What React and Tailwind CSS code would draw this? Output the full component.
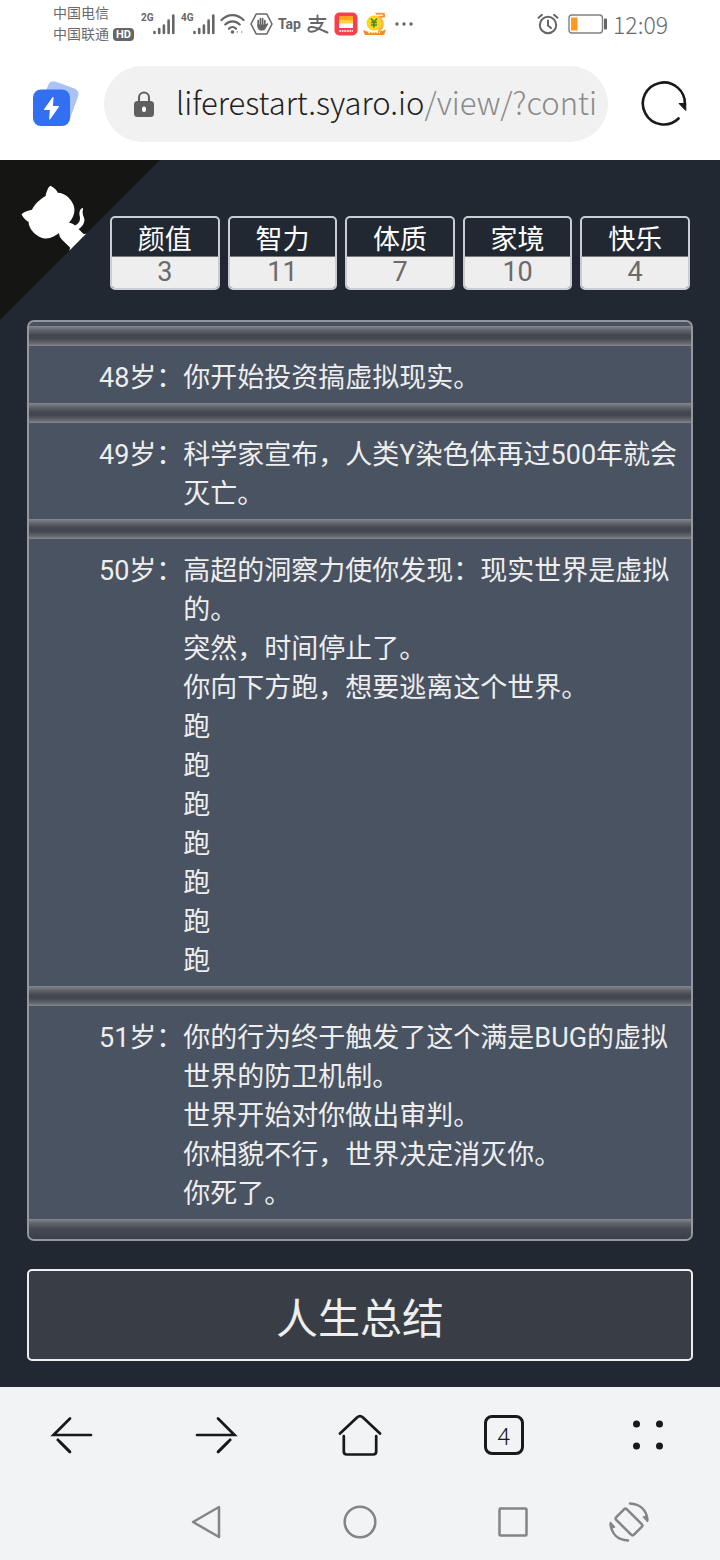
import React from "react";

const stats = [
  { label: "颜值", value: 3 },
  { label: "智力", value: 11 },
  { label: "体质", value: 7 },
  { label: "家境", value: 10 },
  { label: "快乐", value: 4 },
];

const events = [
  { age: 48, lines: ["你开始投资搞虚拟现实。"] },
  { age: 49, lines: ["科学家宣布，人类Y染色体再过500年就会灭亡。"] },
  {
    age: 50,
    lines: [
      "高超的洞察力使你发现：现实世界是虚拟的。",
      "突然，时间停止了。",
      "你向下方跑，想要逃离这个世界。",
      "跑",
      "跑",
      "跑",
      "跑",
      "跑",
      "跑",
      "跑",
    ],
  },
  {
    age: 51,
    lines: [
      "你的行为终于触发了这个满是BUG的虚拟世界的防卫机制。",
      "世界开始对你做出审判。",
      "你相貌不行，世界决定消灭你。",
      "你死了。",
    ],
  },
];

function Signal({ label }) {
  return (
    <span className="flex h-[22px] w-[33px] items-start text-[#666]">
      <span className="w-3 shrink-0 text-[10px] leading-[10px] font-bold font-['Roboto',sans-serif]">{label}</span>
      <svg className="shrink-0" width="22" height="22" viewBox="0 0 22 22" fill="none" stroke="currentColor" strokeWidth="2.6" strokeLinecap="round" aria-hidden="true">
        <path d="M1.5 20v-1M6.2 20v-4M10.9 20V12.5M15.6 20V7.5M20.3 20V2.5" />
      </svg>
    </span>
  );
}

function StatusBar() {
  return (
    <header className="flex h-12 items-center justify-between bg-white pr-[52px] pl-[53px] text-[#6b6b6b]">
      <div className="flex items-center">
        <div className="text-[14px] leading-[21px]">
          <div>中国电信</div>
          <div className="flex items-center gap-1">
            中国联通
            <span className="rounded-[4px] bg-[#666] px-[3px] font-['Roboto',sans-serif] text-[11px] leading-[13px] font-bold text-white">HD</span>
          </div>
        </div>
        <div className="ml-[7px] flex items-center gap-[7px]">
          <Signal label="2G" />
          <Signal label="4G" />
        </div>
        <svg className="ml-[6px]" width="26" height="22" viewBox="0 0 26 22" fill="none" stroke="#666" strokeWidth="2.2" strokeLinecap="round" aria-hidden="true">
          <path d="M1.5 7C8 .5 17 .5 23.5 7M5.3 11.5c4.2-4.2 10.200-4.200 14.400 0M9 15.600c2-2 5-2 7 0" />
          <circle cx="12.500" cy="19" r="1.800" fill="#666" stroke="none" />
          <path d="M18 17.500v3l-2-1.500zM21 17.500v3l2-1.500z" fill="#bbb" stroke="none" />
        </svg>
        <svg className="ml-1" width="23" height="24" viewBox="0 0 23 24" fill="none" stroke="#666" aria-hidden="true">
          <path d="M6.200 2h10.600L22 12l-5.200 10H6.200L1 12z" strokeWidth="1.600" strokeLinejoin="round" />
          <path d="M8.200 14V8.500M10.400 13V6.500M12.600 13V6.500M14.800 14V8.500" strokeWidth="1.700" strokeLinecap="round" />
          <path d="M7.300 12.500h8.400l1.800-1.500.8 1-2.800 4.700c-1 1.500-2 1.800-3.900 1.800-3 0-4.300-2-4.300-6z" fill="#666" stroke="none" />
        </svg>
        <span className="ml-[5px] font-['Roboto',sans-serif] text-[14px] leading-5 font-bold text-[#666]">Tap</span>
        <svg className="ml-[6px]" width="22" height="20" viewBox="0 0 22 20" fill="none" stroke="#666" strokeWidth="1.900" strokeLinecap="round" aria-hidden="true">
          <path d="M2.500 5h16M10.500 1.500V9M4 9h11.500C13.500 14 9 17.800 4.500 17.800c-4.500 0-4-5 .3-4.800C10 13.200 14 16 20.500 18.500" />
        </svg>
        <svg className="ml-[5px]" width="24" height="24" viewBox="0 0 24 24" aria-hidden="true">
          <rect x=".5" y=".5" width="23" height="23" rx="5" fill="#f4404f" />
          <path d="M5 4h14v5H5z" fill="#ffa51f" />
          <path d="M5 8h14v4H5z" fill="#ffd23a" />
          <path d="M5 11.500h14V16H5z" fill="#fff" />
          <path d="M5 19h14" stroke="#fff" strokeWidth="1.500" strokeDasharray="2 .6" />
        </svg>
        <svg className="ml-1" width="25" height="24" viewBox="0 0 25 24" aria-hidden="true">
          <path d="M13 .8h9.500l1 4.500-6.500 1z" fill="#f5943a" />
          <path d="M15 3.200h6" stroke="#fff" strokeWidth="1.200" />
          <path d="M17 4c5 3 6 9 3 14l-4 3z" fill="#f8b84a" />
          <circle cx="12" cy="11" r="7.500" fill="#ffd51f" />
          <path d="M1 18c7 3 15 3 23-.5L22 23H3z" fill="#f28a2b" />
          <path d="M6 20.700h12" stroke="#fff2b0" strokeWidth="1.200" strokeDasharray="2 .7" />
          <path d="M9 6.500l3 3.500 3-3.500M12 10v5.500M9 10.500h6M9 13h6" fill="none" stroke="#4f8a1c" strokeWidth="1.700" />
        </svg>
        <svg className="ml-2" width="18" height="4" viewBox="0 0 18 4" fill="#666" aria-hidden="true">
          <circle cx="2" cy="2" r="1.700" />
          <circle cx="9" cy="2" r="1.700" />
          <circle cx="16" cy="2" r="1.700" />
        </svg>
      </div>
      <div className="flex items-center">
        <svg width="22" height="22" viewBox="0 0 22 22" fill="none" stroke="#666" strokeWidth="2" strokeLinecap="round" aria-hidden="true">
          <circle cx="11" cy="12" r="8.200" />
          <path d="M11 7.500V12.500l3 2.500M1.500 4.800L5 1.800M20.500 4.800L17 1.800" />
        </svg>
        <svg className="ml-[9px]" width="40" height="20" viewBox="0 0 40 20" fill="none" aria-hidden="true">
          <rect x="1" y="1" width="33.500" height="18" rx="3" stroke="#808080" strokeWidth="1.400" />
          <rect x="3" y="3.500" width="6.500" height="13" fill="#ff9a1f" />
          <rect x="36" y="4.500" width="3" height="11" rx="1" fill="#666" />
        </svg>
        <time className="ml-[5px] font-['Noto_Sans_CJK_SC',sans-serif] text-[23px] leading-6 font-light">12:09</time>
      </div>
    </header>
  );
}

function AddressBar() {
  return (
    <div className="flex items-center bg-white pt-[18px] pr-[33px] pb-[18px] pl-8">
      <button type="button" aria-label="快捷" className="shrink-0">
        <svg width="48" height="46" viewBox="0 0 48 46" aria-hidden="true">
          <rect x="11" y="3" width="32" height="36" rx="6" fill="#a9c3fa" transform="rotate(20 27 21)" />
          <rect x="1" y="8.500" width="37" height="36.500" rx="8" fill="#326ff2" />
          <path d="M21 16.500L12.500 28.500h6L17.700 38l8.800-12.500h-6.200z" fill="#fff" stroke="#fff" strokeWidth="1.200" strokeLinejoin="round" />
        </svg>
      </button>
      <div className="ml-6 flex h-[76px] min-w-0 flex-1 items-center rounded-full bg-[#f1f1f1] pr-2 pl-[30px]">
        <svg className="shrink-0" width="20" height="27" viewBox="0 0 20 27" aria-hidden="true">
          <path d="M5 11V6.500a5 5 0 0 1 10 0V11" fill="none" stroke="#606060" strokeWidth="2" />
          <rect x="0" y="10" width="20" height="16" rx="3.500" fill="#606060" />
          <rect x="8" y="15.500" width="4" height="5.500" rx="2" fill="#fff" />
        </svg>
        <div className="ml-[22px] min-w-0 pb-1 font-['Noto_Sans_CJK_SC',sans-serif] text-[31px] leading-[44px] font-light whitespace-nowrap text-[#8a8a8a]">
          <span className="text-[#222]">liferestart.syaro.io</span>/view/?conti
        </div>
      </div>
      <button type="button" aria-label="刷新" className="ml-[33px] shrink-0">
        <svg width="46" height="46" viewBox="0 0 46 46" fill="none" aria-hidden="true">
          <path d="M37.500 37.500A21 21 0 1 1 43.800 24" stroke="#17191b" strokeWidth="2.600" strokeLinecap="round" />
          <path d="M38 22.500h6.800v7z" fill="#17191b" stroke="#17191b" strokeWidth="1" strokeLinejoin="round" />
        </svg>
      </button>
    </div>
  );
}

function Divider({ last = false }) {
  return (
    <div
      aria-hidden="true"
      className={
        last
          ? "h-5 bg-[linear-gradient(#85888e,#62656b_20%,#454a50_50%,#3b4046)]"
          : "h-5 bg-[linear-gradient(#85888e,#62656b_20%,#44474e_45%,#44474e_62%,#62656b_85%,#85888e)]"
      }
    />
  );
}

function GithubCorner() {
  return (
    <a href="#source" aria-label="GitHub" className="absolute top-0 left-0">
      <svg width="160" height="160" viewBox="0 0 250 250" className="-scale-x-100" aria-hidden="true">
        <path d="M0 0L115 115H130L142 142L250 250V0Z" fill="#151513" />
        <path d="M128.3,109.0 C113.8,99.7 119.0,89.6 119.0,89.6 C122.0,82.7 120.5,78.6 120.5,78.6 C119.2,72.0 123.4,76.3 123.4,76.3 C127.3,80.9 125.5,87.3 125.5,87.3 C122.9,97.6 130.6,101.9 134.4,103.2" fill="#fff" />
        <path d="M115.0,115.0 C114.9,115.1 118.7,116.5 119.8,115.4 L133.7,101.6 C136.9,99.2 139.9,98.4 142.2,98.6 C133.8,88.0 127.5,74.4 143.8,58.0 C148.5,53.4 154.0,51.2 159.7,51.0 C160.3,49.4 163.2,43.6 171.4,40.1 C171.4,40.1 176.1,42.5 178.8,56.2 C183.1,58.6 187.2,61.8 190.9,65.4 C194.5,69.0 197.7,73.2 200.1,77.6 C213.8,80.2 216.3,84.9 216.3,84.9 C212.7,93.1 206.9,96.0 205.4,96.6 C205.1,102.4 203.0,107.8 198.3,112.5 C181.9,128.9 168.3,122.5 157.7,114.1 C157.9,116.9 156.7,120.9 152.7,124.9 L141.0,136.5 C139.8,137.7 141.6,141.9 141.8,141.8 Z" fill="#fff" />
      </svg>
    </a>
  );
}

function Game() {
  return (
    <main className="relative bg-[#222831] px-[27px] pt-14 pb-[26px] text-[#eee]">
      <GithubCorner />
      <ul className="mr-[3px] ml-[83px] grid grid-cols-5 gap-2 text-center text-[27px]">
        {stats.map((s) => (
          <li key={s.label} className="overflow-hidden rounded-[5px] border-2 border-[#c9ccd1]">
            <div className="h-[38px] leading-[45px] text-white">{s.label}</div>
            <div className="h-8 border-t border-[#777] bg-[#eee] leading-[30px] text-[#6b6b6b]">{s.value}</div>
          </li>
        ))}
      </ul>
      <ol className="mt-[30px] overflow-hidden rounded-[7px] border-2 border-[#94979e] bg-[#4a5361] pt-1 text-[27px] leading-[39px]">
        {events.map((e) => (
          <li key={e.age}>
            <Divider />
            <div className="flex pt-[13px] pr-[5px] pb-[5px] pl-[70px]">
              <span className="shrink-0">{e.age}岁：</span>
              <div className="min-w-0 flex-1">
                {e.lines.map((line, i) => (
                  <p key={i}>{line}</p>
                ))}
              </div>
            </div>
          </li>
        ))}
        <li aria-hidden="true">
          <Divider last />
        </li>
      </ol>
      <button type="button" className="mt-7 block w-full rounded-[5px] border-2 border-[#eee] bg-[#393e46] pt-4 pb-[6px] text-center text-[42px] leading-[66px]">
        人生总结
      </button>
    </main>
  );
}

function BrowserToolbar() {
  return (
    <nav aria-label="浏览器" className="grid h-24 grid-cols-5 place-items-center text-[#17191b]">
      <button type="button" aria-label="后退">
        <svg width="44" height="40" viewBox="0 0 44 40" fill="none" stroke="currentColor" strokeWidth="2.700" strokeLinecap="round" aria-hidden="true">
          <path d="M41 20H3.500L20 3.500" />
          <path d="M7 24L20 37" strokeLinecap="butt" />
          <path d="M10 27L20 37" />
        </svg>
      </button>
      <button type="button" aria-label="前进">
        <svg width="44" height="40" viewBox="0 0 44 40" fill="none" stroke="currentColor" strokeWidth="2.700" strokeLinecap="round" aria-hidden="true">
          <path d="M3 20H40.500L24 3.500" />
          <path d="M37 24L24 37" strokeLinecap="butt" />
          <path d="M34 27L24 37" />
        </svg>
      </button>
      <button type="button" aria-label="主页">
        <svg width="44" height="42" viewBox="0 0 44 42" fill="none" stroke="currentColor" strokeWidth="2.700" strokeLinecap="round" strokeLinejoin="round" aria-hidden="true">
          <path d="M2 19.500L19 3.500Q22 .8 25 3.500L42 19.500M5.800 22V37.500Q5.800 40.500 8.800 40.500H35.200Q38.200 40.500 38.200 37.500V22" />
        </svg>
      </button>
      <button type="button" aria-label="标签页 4" className="size-10 rounded-[8px] border-3 border-[#17191b] font-['Noto_Sans_CJK_SC',sans-serif] text-[24px] leading-[32px] font-light">
        4
      </button>
      <button type="button" aria-label="菜单">
        <svg width="32" height="32" viewBox="0 0 32 32" fill="currentColor" aria-hidden="true">
          <circle cx="4.500" cy="5" r="3.500" />
          <circle cx="27.500" cy="5" r="3.500" />
          <circle cx="4.500" cy="27" r="3.500" />
          <circle cx="27.500" cy="27" r="3.500" />
        </svg>
      </button>
    </nav>
  );
}

function SystemNav() {
  return (
    <nav aria-label="系统导航" className="grid h-[77px] grid-cols-[129fr_154fr_154fr_152fr_80fr_51fr] place-items-center text-[#858585]">
      <span />
      <button type="button" aria-label="返回">
        <svg width="32" height="36" viewBox="0 0 32 36" fill="none" stroke="currentColor" strokeWidth="2.500" strokeLinejoin="round" aria-hidden="true">
          <path d="M29 3v30L3 18z" />
        </svg>
      </button>
      <button type="button" aria-label="主屏幕">
        <svg width="34" height="34" viewBox="0 0 34 34" fill="none" stroke="currentColor" strokeWidth="2.500" aria-hidden="true">
          <circle cx="17" cy="17" r="15.300" />
        </svg>
      </button>
      <button type="button" aria-label="最近任务">
        <svg width="30" height="30" viewBox="0 0 30 30" fill="none" stroke="currentColor" strokeWidth="2.500" aria-hidden="true">
          <rect x="1.500" y="1.500" width="27" height="27" rx="1" />
        </svg>
      </button>
      <button type="button" aria-label="旋转屏幕">
        <svg width="42" height="42" viewBox="0 0 42 42" fill="none" stroke="currentColor" strokeWidth="2.500" strokeLinecap="round" strokeLinejoin="round" aria-hidden="true">
          <rect x="8.500" y="13.500" width="25" height="15" rx="2" transform="rotate(45 21 21)" />
          <path d="M22 2.500C32 3 38.500 9 39.500 19M20 39.500C10 39 3.500 33 2.500 23" />
          <path d="M39.500 20.500L35.500 16L39 15zM2.500 21.500L6.500 26L3 27z" fill="currentColor" strokeWidth="1.500" />
        </svg>
      </button>
      <span />
    </nav>
  );
}

export default function App() {
  return (
    <div className="min-h-screen bg-[#f1f3f5] font-['Roboto','Noto_Sans_CJK_SC',sans-serif]">
      <StatusBar />
      <AddressBar />
      <Game />
      <BrowserToolbar />
      <SystemNav />
    </div>
  );
}
